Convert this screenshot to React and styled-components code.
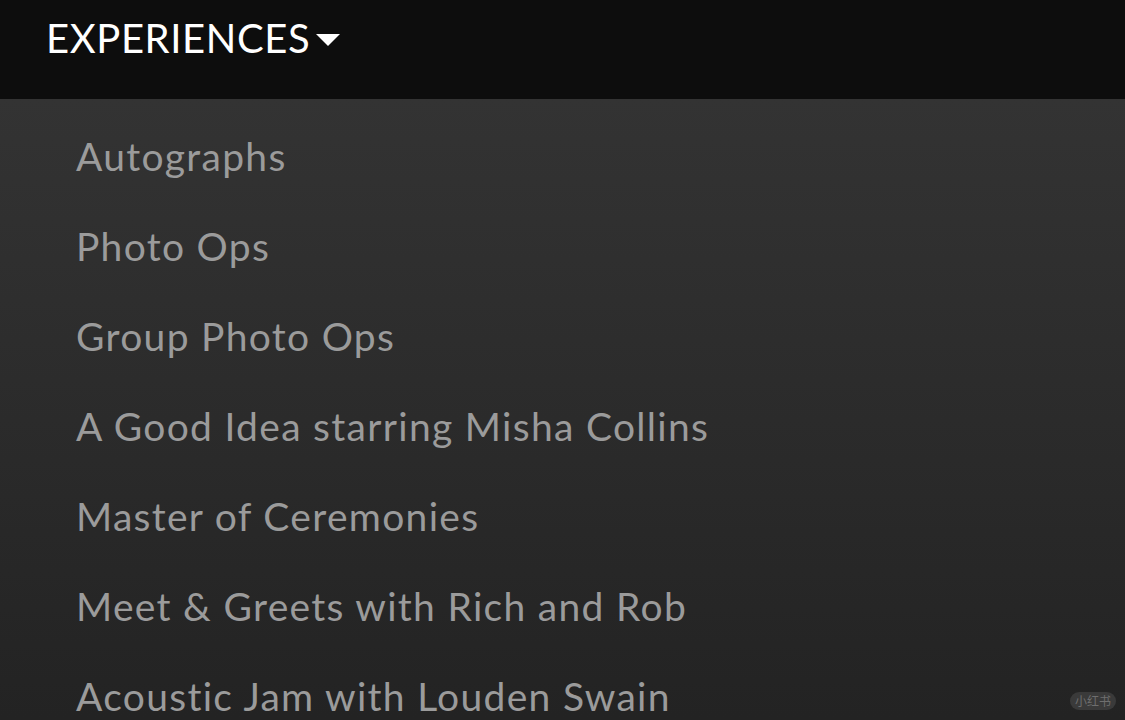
import React from "react";
import styled, { createGlobalStyle } from "styled-components";

const Global = createGlobalStyle`
  html, body { margin: 0; padding: 0; background: #262626; }
  body { font-family: Lato, "Noto Sans CJK SC", sans-serif; overflow: hidden; }
`;

const Page = styled.div`
  width: 1125px;
  height: 720px;
  position: relative;
  overflow: hidden;
  display: flex;
  flex-direction: column;
`;

const TopBar = styled.header`
  height: 99px;
  background: #0d0d0d;
  display: flex;
  align-items: flex-start;
  padding: 14px 0 0 46px;
  box-sizing: border-box;
  flex-shrink: 0;
`;

const MenuTitle = styled.div`
  display: flex;
  align-items: center;
  gap: 6px;
  color: #ffffff;
  font-size: 40px;
  font-weight: 400;
  letter-spacing: 0.6px;
  line-height: 48px;
`;

const Caret = styled.svg`
  width: 24px;
  height: 12px;
  margin-top: 4px;
`;

const Panel = styled.nav`
  flex: 1;
  background: linear-gradient(180deg, #333333 0%, #2a2a2a 55%, #222222 100%);
  display: flex;
  flex-direction: column;
  padding: 26px 0 0 76px;
  box-sizing: border-box;
`;

const Item = styled.a`
  display: block;
  height: 90px;
  line-height: 62px;
  color: #9b9b9b;
  font-size: 39px;
  letter-spacing: 1.3px;
  text-decoration: none;
`;

const Badge = styled.div`
  position: absolute;
  right: 9px;
  bottom: 10px;
  padding: 0 5px;
  height: 18px;
  border-radius: 9px;
  background: #3a3a3a;
  color: #6e6e6e;
  font-size: 12px;
  line-height: 18px;
  font-family: "Noto Sans CJK SC", sans-serif;
`;

const items = [
  "Autographs",
  "Photo Ops",
  "Group Photo Ops",
  "A Good Idea starring Misha Collins",
  "Master of Ceremonies",
  "Meet & Greets with Rich and Rob",
  "Acoustic Jam with Louden Swain",
];

export default function App() {
  return (
    <Page>
      <Global />
      <TopBar>
        <MenuTitle>
          EXPERIENCES
          <Caret viewBox="0 0 24 12">
            <polygon points="0,0 24,0 12,12" fill="#fff" />
          </Caret>
        </MenuTitle>
      </TopBar>
      <Panel>
        {items.map((t) => (
          <Item key={t} href="#">{t}</Item>
        ))}
      </Panel>
      <Badge>小红书</Badge>
    </Page>
  );
}
